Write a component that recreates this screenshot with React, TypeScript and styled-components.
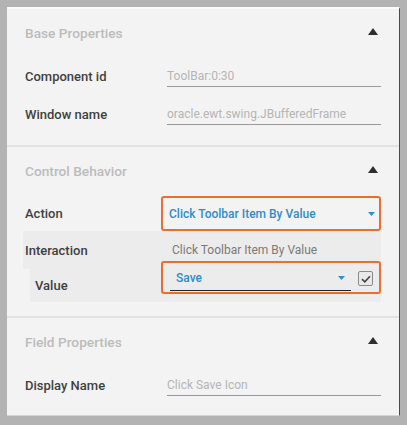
import styled, { createGlobalStyle } from 'styled-components';

const GlobalStyle = createGlobalStyle`
  html, body {
    margin: 0;
    padding: 0;
    background: #b3b3b3;
  }
  body {
    font-family: Roboto, 'Liberation Sans', Arial, sans-serif;
  }
`;

const Caret = ({ color = '#2f8fd0' }: { color?: string }) => (
  <svg width="7" height="4" viewBox="0 0 7 4">
    <path d="M0 0 L7 0 L3.5 4 Z" fill={color} />
  </svg>
);

const Triangle = () => (
  <svg width="10" height="7" viewBox="0 0 10 7">
    <path d="M5 0 L10 7 L0 7 Z" fill="#2e2e2e" />
  </svg>
);

const Check = () => (
  <svg width="10" height="8" viewBox="0 0 10 8">
    <path d="M1 4.2 L3.8 6.8 L9 1.2" fill="none" stroke="#444" strokeWidth="1.6" />
  </svg>
);

const App = () => {
  return (
    <Frame>
      <GlobalStyle />
      <Panel>
        <Section $bottom={12}>
          <Header>
            <HeaderTitle>Base Properties</HeaderTitle>
            <Toggle>
              <Triangle />
            </Toggle>
          </Header>
          <Row>
            <Label>Component id</Label>
            <TextField>ToolBar:0:30</TextField>
          </Row>
          <Row>
            <Label>Window name</Label>
            <TextField>oracle.ewt.swing.JBufferedFrame</TextField>
          </Row>
        </Section>

        <Section $bottom={14}>
          <Header>
            <HeaderTitle>Control Behavior</HeaderTitle>
            <Toggle>
              <Triangle />
            </Toggle>
          </Header>
          <ActionRow>
            <Label>Action</Label>
            <Highlight $height={35}>
              <SelectText>Click Toolbar Item By Value</SelectText>
              <Caret />
            </Highlight>
          </ActionRow>
          <InteractionRow>
            <Label>Interaction</Label>
            <StaticValue>Click Toolbar Item By Value</StaticValue>
          </InteractionRow>
          <ValueRow>
            <ValueLabel>Value</ValueLabel>
            <Highlight $height={33}>
              <ValueSelect>
                <SelectText>Save</SelectText>
                <Caret />
              </ValueSelect>
              <Checkbox>
                <Check />
              </Checkbox>
            </Highlight>
          </ValueRow>
        </Section>

        <Section $last>
          <Header>
            <HeaderTitle>Field Properties</HeaderTitle>
            <Toggle>
              <Triangle />
            </Toggle>
          </Header>
          <Row>
            <Label>Display Name</Label>
            <TextField>Click Save Icon</TextField>
          </Row>
        </Section>
      </Panel>
    </Frame>
  );
};

export default App;

const Frame = styled.div`
  width: 407px;
  height: 425px;
  box-sizing: border-box;
  padding: 7px 7px 9px 7px;
  background: #b3b3b3;
`;

const Panel = styled.div`
  height: 100%;
  box-sizing: border-box;
  background: #f3f3f3;
  border-top: 2px solid #fbfbfb;
  border-right: 1.5px solid #4a4a4a;
  border-bottom: 1px solid #d6d6d6;
  display: flex;
  flex-direction: column;
`;

const Section = styled.section<{ $bottom?: number; $last?: boolean }>`
  padding: 0 18px ${(p) => p.$bottom ?? 0}px 18px;
  border-bottom: ${(p) => (p.$last ? 'none' : '2px solid #e2e2e2')};
  display: flex;
  flex-direction: column;
`;

const Header = styled.div`
  height: 48px;
  display: flex;
  align-items: center;
  justify-content: space-between;
`;

const HeaderTitle = styled.span`
  font-size: 13.7px;
  font-weight: 500;
  color: #bcbcbc;
`;

const Toggle = styled.span`
  display: flex;
  margin-right: 3px;
  margin-top: -4px;
`;

const Row = styled.div`
  display: grid;
  grid-template-columns: 142px 1fr;
  align-items: center;
  height: 38px;
`;

const Label = styled.span`
  font-size: 13px;
  font-weight: 500;
  color: #3f3f3f;
`;

const TextField = styled.div`
  align-self: start;
  font-size: 12px;
  line-height: 14px;
  color: #b5b5b5;
  height: 30px;
  box-sizing: border-box;
  padding-top: 12px;
  border-bottom: 1.5px solid #9a9a9a;
`;

const ActionRow = styled.div`
  display: grid;
  grid-template-columns: 136px 1fr;
  align-items: center;
  margin-top: 1px;
`;

const Highlight = styled.div<{ $height: number }>`
  align-self: start;
  height: ${(p) => p.$height}px;
  box-sizing: border-box;
  border: 2px solid #ea6f2b;
  border-radius: 3px;
  padding: 0 4px 0 6px;
  display: flex;
  align-items: center;
  justify-content: space-between;
  gap: 7px;
`;

const SelectText = styled.span`
  font-size: 12px;
  font-weight: 500;
  color: #2f8ccc;
`;

const InteractionRow = styled.div`
  display: grid;
  grid-template-columns: 147px 1fr;
  align-items: center;
  height: 38px;
  margin-left: -2px;
  padding-left: 2px;
  background: #ececec;
`;

const StaticValue = styled.span`
  font-size: 12px;
  color: #7a7a7a;
`;

const ValueRow = styled.div`
  display: grid;
  grid-template-columns: 126px 1fr;
  height: 41px;
  margin: -8px 0 0 5px;
  padding-left: 5px;
  background: #ececec;
`;

const ValueLabel = styled(Label)`
  align-self: center;
  margin-top: 8px;
`;

const ValueSelect = styled.div`
  flex: 1;
  align-self: stretch;
  box-sizing: border-box;
  display: flex;
  align-items: center;
  justify-content: space-between;
  padding: 3px 6px 0 6px;
  margin: 0 0 1px 1px;
  border-bottom: 1.5px solid #222;
`;

const Checkbox = styled.div`
  width: 13px;
  height: 13px;
  border: 1px solid #8a8a8a;
  border-radius: 2px;
  background: #e9e9e9;
  display: flex;
  align-items: center;
  justify-content: center;
  margin: 2px 2px 0 0;
`;
